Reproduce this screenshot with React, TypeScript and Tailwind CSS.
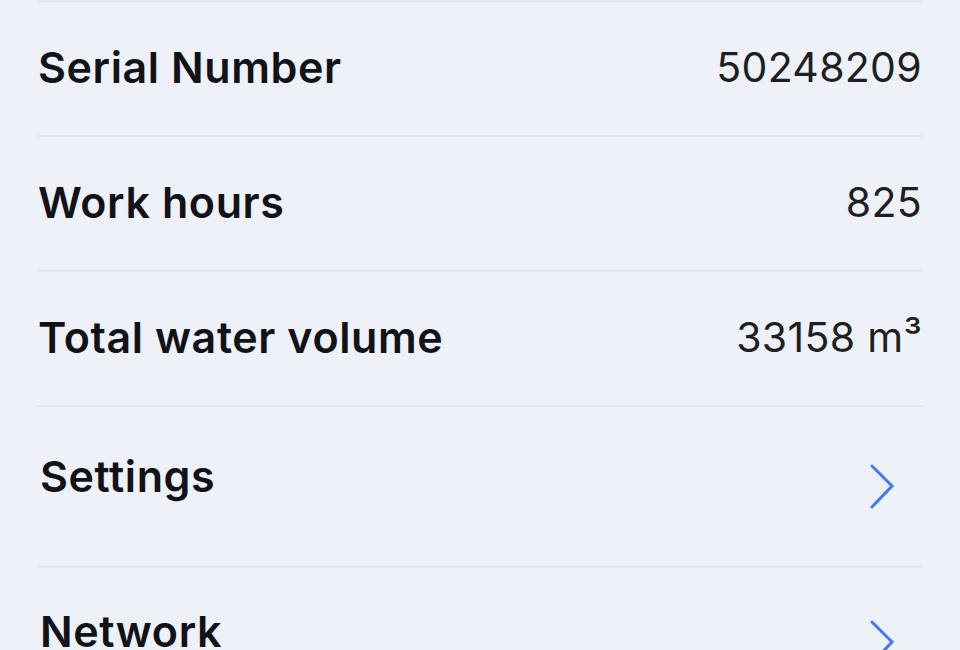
import React from "react";

const Chevron = () => (
  <svg width="28" height="46" viewBox="0 0 28 46" fill="none" className="mr-[26px]">
    <polyline points="4,2 24,22 4,43" stroke="#3f7af8" strokeWidth="3" strokeLinecap="round" strokeLinejoin="miter" />
  </svg>
);

const labelCls = "font-['Inter',sans-serif] text-[43px] font-semibold tracking-[0.6px] text-[#111318] leading-none";

const InfoRow = ({ label, value }: { label: string; value: string }) => (
  <div className="flex h-[135px] items-center justify-between border-b-2 border-[#e2e6f0]">
    <span className={`${labelCls} pb-[2px]`}>{label}</span>
    <span className="pb-[2px] font-['Inter',sans-serif] text-[41px] font-normal leading-none tracking-[0.3px] text-[#1e1f23]">{value}</span>
  </div>
);

export default function App() {
  return (
    <div className="h-[650px] w-[960px] overflow-hidden bg-[#eef1f7]">
      <div className="px-[38px]">
        <div className="h-[2px] bg-[#e2e6f0]" />
        <InfoRow label="Serial Number" value="50248209" />
        <InfoRow label="Work hours" value="825" />
        <InfoRow label="Total water volume" value="33158 m³" />
        <div className="flex h-[161px] items-center justify-between border-b-2 border-[#e2e6f0]">
          <span className={`${labelCls} pb-[20px] pl-[2px]`}>Settings</span>
          <Chevron />
        </div>
        <div className="flex h-[160px] items-center justify-between">
          <span className={`${labelCls} pb-[34px] pl-[2px]`}>Network</span>
          <div className="pb-[10px]">
            <Chevron />
          </div>
        </div>
      </div>
    </div>
  );
}
